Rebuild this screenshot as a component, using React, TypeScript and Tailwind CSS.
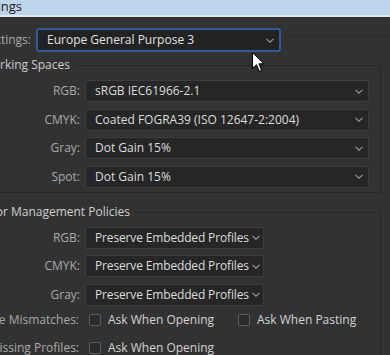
import React from "react";

const Chevron = ({ className = "" }: { className?: string }) => (
  <svg width="8" height="5" viewBox="0 0 8 5" className={className}>
    <path d="M0.5 0.8 L4 4.2 L7.5 0.8" fill="none" stroke="#9a9a9a" strokeWidth="1.1" />
  </svg>
);

const Label = ({ text, w = "w-[80px]" }: { text: string; w?: string }) => (
  <div className={`${w} shrink-0 flex justify-end whitespace-nowrap text-[#a9a9a9]`}>{text}</div>
);

const Select = ({ value, wide = true }: { value: string; wide?: boolean }) => (
  <div
    className={`${wide ? "w-[284px] pr-[5px]" : "w-[179px] pr-[3px]"} h-[22px] ml-[5px] flex items-center justify-between pl-[9px] bg-[#262626] border border-[#3e3e3e] rounded-[2px] text-[#dddddd] whitespace-nowrap`}
  >
    <span className={wide ? "" : "tracking-[-0.15px]"}>{value}</span>
    <Chevron />
  </div>
);

const Row = ({ label, value, wide = true }: { label: string; value: string; wide?: boolean }) => (
  <div className="flex items-center h-[22px]">
    <Label text={label} />
    <Select value={value} wide={wide} />
  </div>
);

const Check = ({ text }: { text: string }) => (
  <div className="flex items-center">
    <div className="w-[12px] h-[12px] border border-[#5c5c5c] bg-[#2b2b2b] rounded-[2px]" />
    <span className="ml-[7px] text-[#d4d4d4] whitespace-nowrap">{text}</span>
  </div>
);

export default function App() {
  return (
    <div className="relative w-[390px] h-[355px] overflow-hidden bg-[#323232] font-['Open_Sans',sans-serif] text-[12px] leading-none">
      {/* title bar */}
      <div className="h-[15px] bg-[#bdd4eb] flex items-center">
        <div className="w-[22px] flex justify-end whitespace-nowrap text-[13px] text-[#1a1a1a] -mt-[3px]">Color Settings</div>
      </div>
      <div className="h-[2px] bg-[#dfe9f4]" />

      {/* settings row */}
      <div className="flex items-center mt-[11px] h-[24px]">
        <Label text="Settings:" w="w-[31px]" />
        <div className="w-[245px] h-[24px] ml-[5px] flex items-center justify-between pl-[9px] pr-[5px] bg-[#222222] border-2 border-[#2f5d98] rounded-[3px] text-[#e2e2e2] whitespace-nowrap">
          <span>Europe General Purpose 3</span>
          <Chevron />
        </div>
        <div className="flex-1 h-px bg-[#2a2a2a] ml-[6px] -mt-[7px]" />
      </div>

      {/* Working spaces */}
      <div className="mt-[6px] mr-[9px]">
        <div className="flex h-[14px]">
          <div className="w-[70px] shrink-0 flex justify-end whitespace-nowrap text-[#cfcfcf] items-center">
            <span>Working Spaces</span>
          </div>
          <div className="flex-1 mt-[7px] ml-[5px] border-t border-r border-[#262626]" />
        </div>
        <div className="border-r border-b border-[#262626] pt-[8px] pb-[4px] flex flex-col gap-[6.5px]">
          <Row label="RGB:" value="sRGB IEC61966-2.1" />
          <Row label="CMYK:" value="Coated FOGRA39 (ISO 12647-2:2004)" />
          <Row label="Gray:" value="Dot Gain 15%" />
          <Row label="Spot:" value="Dot Gain 15%" />
        </div>
      </div>

      {/* Color management policies */}
      <div className="mt-[12px] mr-[9px]">
        <div className="flex h-[14px]">
          <div className="w-[130px] shrink-0 flex justify-end whitespace-nowrap text-[#cfcfcf] items-center">
            <span>Color Management Policies</span>
          </div>
          <div className="flex-1 mt-[7px] ml-[5px] border-t border-r border-[#262626]" />
        </div>
        <div className="border-r border-[#262626] pt-[8px] flex flex-col h-[200px]">
          <div className="flex flex-col gap-[6.5px]">
            <Row label="RGB:" value="Preserve Embedded Profiles" wide={false} />
            <Row label="CMYK:" value="Preserve Embedded Profiles" wide={false} />
            <Row label="Gray:" value="Preserve Embedded Profiles" wide={false} />
          </div>
          <div className="flex items-center h-[22px] mt-[3.5px]">
            <Label text="Profile Mismatches:" w="w-[79px]" />
            <div className="ml-[10px] w-[149px]">
              <Check text="Ask When Opening" />
            </div>
            <Check text="Ask When Pasting" />
          </div>
          <div className="flex items-center h-[22px] mt-[6px]">
            <Label text="Missing Profiles:" w="w-[79px]" />
            <div className="ml-[10px]">
              <Check text="Ask When Opening" />
            </div>
          </div>
        </div>
      </div>

      {/* mouse cursor */}
      <svg className="absolute left-[252px] top-[52px]" width="13" height="21" viewBox="0 0 13 21">
        <path d="M0.5 0.5 L0.5 16.5 L4.5 12.7 L7.3 19.3 L9.6 18.3 L6.9 11.8 L12 11.8 Z" fill="#ffffff" stroke="#000000" strokeWidth="1" />
      </svg>
    </div>
  );
}
